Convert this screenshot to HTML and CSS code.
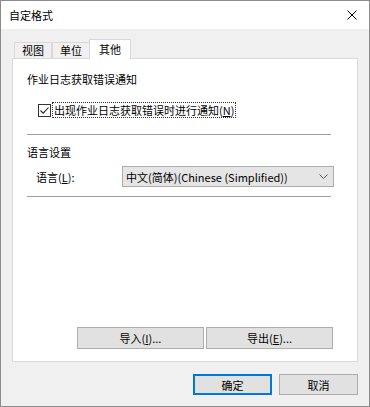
FILE: index.html
```html
<!DOCTYPE html>
<html>
<head>
<meta charset="utf-8">
<link rel="stylesheet" href="styles.css">
</head>
<body>
<div class="dialog">
	<div class="titlebar">
		<span class="title">自定格式</span>
		<span class="close">
			<svg width="10" height="10" viewBox="0 0 10 10"><path d="M0.5 0.5 L9.5 9.5 M9.5 0.5 L0.5 9.5" stroke="#000" stroke-width="1" fill="none"/></svg>
		</span>
	</div>
	<div class="content">
		<div class="tabs">
			<div class="tab">视图</div>
			<div class="tab">单位</div>
			<div class="tab active">其他</div>
		</div>
		<div class="panel">
			<div class="group-title">作业日志获取错误通知</div>
			<label class="check-row">
				<span class="checkbox">
					<svg width="11" height="11" viewBox="0 0 11 11"><path d="M1.5 5.5 L4.2 8.2 L9.5 2.5" stroke="#222" stroke-width="1.1" fill="none"/></svg>
				</span>
				<span class="focus">出现作业日志获取错误时进行通知(<u>N</u>)</span>
			</label>
			<div class="sep"></div>
			<div class="group-title">语言设置</div>
			<div class="lang-row">
				<span class="lang-label">语言(<u>L</u>):</span>
				<div class="combo">
					<span>中文(简体)(Chinese (Simplified))</span>
					<svg width="9" height="6" viewBox="0 0 9 6"><path d="M0.5 0.5 L4.5 4.5 L8.5 0.5" stroke="#555" stroke-width="1" fill="none"/></svg>
				</div>
			</div>
			<div class="sep sep-low"></div>
			<div class="io-row">
				<button class="btn io">导入(<u>I</u>)...</button>
				<button class="btn io">导出(<u>E</u>)...</button>
			</div>
		</div>
		<div class="footer">
			<button class="btn foot default">确定</button>
			<button class="btn foot">取消</button>
		</div>
	</div>
</div>
</body>
</html>
```

FILE: styles.css
```css
html, body {
	margin: 0;
	padding: 0;
	background: #f0f0f0;
}

body {
	font-family: "Noto Sans CJK SC", "Liberation Sans", sans-serif;
	font-size: 11px;
	color: #000;
}

.dialog {
	width: 370px;
	height: 407px;
	box-sizing: border-box;
	border: 1px solid #8c8c8c;
	display: flex;
	flex-direction: column;
	background: #f0f0f0;
}

.titlebar {
	height: 28px;
	background: #fff;
	display: flex;
	align-items: center;
	justify-content: space-between;
	padding: 0 8px 0 8px;
}

.title {
	line-height: 16px;
	margin-top: -1px;
}

.close {
	width: 10px;
	height: 10px;
	margin-right: 4px;
	margin-top: -1px;
	display: flex;
}

.content {
	flex: 1;
	padding: 10px 11px 0 11px;
	display: flex;
	flex-direction: column;
}

.tabs {
	display: flex;
	align-items: flex-end;
	height: 19px;
	padding-left: 2px;
	position: relative;
	z-index: 1;
}

.tab {
	height: 16px;
	line-height: 15px;
	border: 1px solid #d9d9d9;
	border-bottom: none;
	box-sizing: border-box;
	width: 38px;
	text-align: center;
	background: #f0f0f0;
	margin-right: 0;
}

.tab + .tab {
	margin-left: 0;
}

.tab.active {
	height: 20px;
	width: 42px;
	line-height: 18px;
	background: #fff;
	margin-bottom: -1px;
	margin-left: -1px;
}

.panel {
	height: 304px;
	box-sizing: border-box;
	border: 1px solid #d9d9d9;
	background: #fff;
	padding: 12px 24px 12px 14px;
	display: flex;
	flex-direction: column;
}

.group-title {
	line-height: 16px;
}

.check-row {
	display: flex;
	align-items: center;
	margin-top: 15px;
	margin-left: 11px;
	height: 16px;
}

.checkbox {
	width: 13px;
	height: 13px;
	box-sizing: border-box;
	border: 1px solid #333;
	background: #fff;
	display: flex;
	align-items: center;
	justify-content: center;
}

.focus {
	margin-left: 1px;
	line-height: 14px;
	border: 1px dotted #333;
	padding: 0 1px;
}

.sep {
	height: 1px;
	background: #a0a0a0;
	margin: 16px 2px 9px 0;
}

.sep-low {
	margin-top: 9px;
}

.lang-row {
	display: flex;
	align-items: center;
	margin-top: 6px;
}

.lang-label {
	margin-left: 9px;
	width: 86px;
}

.combo {
	width: 212px;
	height: 21px;
	box-sizing: border-box;
	border: 1px solid #adadad;
	background: #e5e5e5;
	display: flex;
	align-items: center;
	justify-content: space-between;
	padding: 0 5px 0 3px;
	margin-right: -3px;
}

.io-row {
	margin-top: auto;
	display: flex;
	justify-content: flex-end;
	gap: 2px;
}

.btn {
	font-family: inherit;
	font-size: 11px;
	color: #000;
	background: #e1e1e1;
	border: 1px solid #adadad;
	box-sizing: border-box;
	padding: 0;
	margin: 0;
}

.io {
	width: 127px;
	height: 22px;
}

.footer {
	display: flex;
	justify-content: flex-end;
	gap: 7px;
	margin-top: 12px;
}

.foot {
	width: 79px;
	height: 21px;
}

.default {
	border: 2px solid #0078d7;
}
```
